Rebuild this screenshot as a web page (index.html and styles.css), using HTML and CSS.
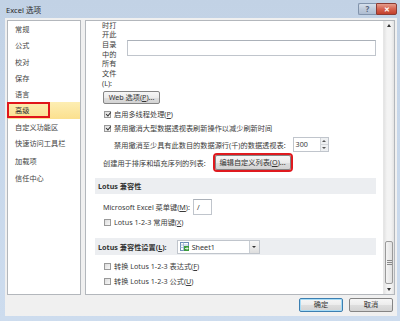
FILE: index.html
```html
<!DOCTYPE html>
<html lang="zh-CN">
  <head>
    <meta charset="UTF-8" />
    <title>Excel 选项</title>
    <link rel="stylesheet" href="styles.css">
  </head>
  <body>
    <div class="window">
      <div class="titlebar">
        <span class="title">Excel 选项</span>
        <div class="caption-buttons">
          <span class="cap-btn help">?</span>
          <span class="cap-btn close">✕</span>
        </div>
      </div>
      <div class="client">
        <div class="panes">
          <ul class="nav">
            <li>常规</li>
            <li>公式</li>
            <li>校对</li>
            <li>保存</li>
            <li>语言</li>
            <li class="active"><span class="mark"></span>高级</li>
            <li>自定义功能区</li>
            <li>快速访问工具栏</li>
            <li class="group">加载项</li>
            <li>信任中心</li>
          </ul>
          <div class="options">
            <div class="content">
              <div class="folder-row">
                <label class="wrap-label">时打开此目录中的所有文件(L):</label>
                <input class="textbox wide" type="text" value="" />
              </div>
              <button class="btn web-btn">Web 选项(<u>P</u>)...</button>
              <div class="check-row first">
                <span class="check on"></span>启用多线程处理(<u>P</u>)
              </div>
              <div class="check-row">
                <span class="check on"></span>禁用撤消大型数据透视表刷新操作以减少刷新时间
              </div>
              <div class="spin-row">
                <span>禁用撤消至少具有此数目的数据源行(千)的数据透视表:</span>
                <div class="spinbox">
                  <span class="spin-value">300</span>
                  <span class="spin-arrows"><i class="up"></i><i class="down"></i></span>
                </div>
              </div>
              <div class="list-row">
                <span>创建用于排序和填充序列的列表:</span>
                <button class="btn marked">编辑自定义列表(<u>O</u>)...</button>
              </div>

              <div class="section">Lotus 兼容性</div>
              <div class="key-row">
                <span>Microsoft Excel 菜单键(<u>M</u>):</span>
                <span class="textbox small">/</span>
              </div>
              <div class="check-row">
                <span class="check"></span>Lotus 1-2-3 常用键(<u>X</u>)
              </div>

              <div class="section settings">
                <span>Lotus 兼容性设置(<u>L</u>):</span>
                <div class="combo">
                  <svg class="sheet-icon" width="9" height="9" viewBox="0 0 9 9">
                    <rect x="0.5" y="0.5" width="8" height="8" fill="#fff" stroke="#6f8fb8" />
                    <path d="M0.5 3H8.5M0.5 5.5H8.5M3.5 0.5V8.5" stroke="#9bb3d3" stroke-width="0.8" />
                    <rect x="4" y="4" width="5" height="5" fill="#3d9b3d" />
                    <path d="M5 6.5H8M6.8 5.2L8 6.5L6.8 7.8" stroke="#fff" stroke-width="0.8" fill="none" />
                  </svg>
                  <span class="combo-text">Sheet1</span>
                  <span class="combo-arrow"></span>
                </div>
              </div>
              <div class="check-row first-after">
                <span class="check"></span>转换 Lotus 1-2-3 表达式(<u>F</u>)
              </div>
              <div class="check-row">
                <span class="check"></span>转换 Lotus 1-2-3 公式(<u>U</u>)
              </div>
            </div>
            <div class="scrollbar">
              <span class="arrow up"></span>
              <span class="track"></span>
              <span class="thumb"><i></i><i></i><i></i></span>
              <span class="arrow down"></span>
            </div>
          </div>
        </div>
        <div class="footer">
          <button class="btn default">确定</button>
          <button class="btn">取消</button>
        </div>
      </div>
    </div>
  </body>
</html>
```

FILE: styles.css
```css
* {
  box-sizing: border-box;
}
body {
  margin: 0;
  font-family: "Noto Sans", "Noto Sans CJK SC", sans-serif;
  font-size: 7.2px;
  color: #3a3a3a;
  background: #fff;
}
u {
  text-decoration: underline;
}
.window {
  width: 400px;
  height: 321px;
  display: flex;
  flex-direction: column;
  padding: 0 3px 5px 5px;
  background: linear-gradient(180deg, #c2d2e5 0%, #c7d7ea 40%, #cddcee 100%);
}
.titlebar {
  height: 18px;
  display: flex;
  align-items: flex-start;
  justify-content: space-between;
}
.title {
  margin: 5px 0 0 1px;
  font-size: 7.6px;
  line-height: 10px;
  color: #2a2a2a;
}
.caption-buttons {
  display: flex;
  margin-top: 3px;
}
.cap-btn {
  height: 12px;
  display: flex;
  align-items: center;
  justify-content: center;
  border: 1px solid #8193ab;
  border-radius: 2px;
  font-size: 8px;
  font-weight: bold;
  line-height: 1;
}
.help {
  width: 18px;
  border-right: none;
  border-radius: 2px 0 0 2px;
  color: #56647a;
  background: linear-gradient(180deg, #d6e0ec 0%, #bfcbdb 50%, #aebdd2 100%);
}
.close {
  width: 21px;
  border-color: #8c3b33;
  border-radius: 0 2px 2px 0;
  color: #fff;
  font-size: 7px;
  background: linear-gradient(180deg, #e59c8c 0%, #d6624f 50%, #c2402c 100%);
}
.client {
  flex: 1;
  display: flex;
  flex-direction: column;
  background: #f0f0f0;
  padding: 2px 2px 0 2px;
}
.panes {
  height: 275px;
  display: flex;
  gap: 4px;
}

/* left navigation */
.nav {
  width: 74px;
  margin: 0;
  padding: 0;
  list-style: none;
  background: #fff;
  border: 1px solid #b3b7bc;
}
.nav li {
  position: relative;
  height: 16.3px;
  line-height: 16.3px;
  padding-left: 7px;
  color: #444;
}
.nav li.group {
  margin-top: 2px;
}
.nav li.active {
  background: linear-gradient(180deg, #fdeeb3 0%, #fbe08e 100%);
  color: #333;
}
.nav .mark {
  position: absolute;
  left: -1px;
  top: 0;
  width: 43px;
  height: 16px;
  border: 2px solid #e0161b;
}

/* right options page */
.options {
  flex: 1;
  display: flex;
  overflow: hidden;
  background: #fff;
  border: 1px solid #b3b7bc;
}
.content {
  flex: 1;
  display: flex;
  flex-direction: column;
  align-items: flex-start;
  padding: 0 7px 0 9px;
  line-height: 14px;
}
.folder-row {
  display: flex;
  align-items: flex-start;
  width: 100%;
  margin: -0.5px 0 0 7px;
}
.wrap-label {
  width: 15px;
  line-height: 9.7px;
  word-break: break-all;
}
.textbox {
  height: 16px;
  background: #fff;
  border: 1px solid #c0c5cc;
  border-top-color: #abb1b9;
  font: inherit;
  padding: 0 3px;
}
.textbox.wide {
  flex: 1;
  margin: 19.5px 7px 0 10px;
}
.btn {
  font: inherit;
  font-size: 7.2px;
  line-height: 1;
  color: #333;
  padding: 0;
  border: 1px solid #858585;
  border-radius: 2px;
  background: linear-gradient(180deg, #f6f6f6 0%, #ececec 50%, #dedede 51%, #d3d3d3 100%);
}
.web-btn {
  width: 57px;
  height: 13px;
  margin: 3px 0 0 8px;
}
.check-row {
  display: flex;
  align-items: center;
  height: 14px;
  margin-left: 9px;
}
.check-row.first {
  margin-top: 3px;
}
.check-row.first-after {
  margin-top: 4px;
}
.check-row + .check-row {
  margin-top: 1px;
}
.check-row.first + .check-row {
  margin-top: 0;
}
.check {
  position: relative;
  width: 7px;
  height: 7px;
  margin-right: 3px;
  border: 1px solid #999;
  background: linear-gradient(135deg, #dcdcdc, #f8f8f8);
}
.check.on::after {
  content: "";
  position: absolute;
  left: 1.5px;
  top: -0.5px;
  width: 1.5px;
  height: 4px;
  border: solid #333;
  border-width: 0 1.2px 1.2px 0;
  transform: rotate(40deg);
}
.spin-row {
  display: flex;
  align-items: center;
  height: 15px;
  margin: 2px 0 0 19px;
}
.spinbox {
  display: flex;
  width: 36px;
  height: 15px;
  margin-left: 7px;
  border: 1px solid #c0c5cc;
  background: #fff;
}
.spin-value {
  flex: 1;
  padding-left: 2px;
  line-height: 13px;
}
.spin-arrows {
  width: 8px;
  display: flex;
  flex-direction: column;
  border-left: 1px solid #d2d5d9;
}
.spin-arrows i {
  flex: 1;
  display: flex;
  align-items: center;
  justify-content: center;
  background: #eef0f2;
}
.spin-arrows i + i {
  border-top: 1px solid #d2d5d9;
}
.spin-arrows i::after {
  content: "";
  border: 2px solid transparent;
}
.spin-arrows .up::after {
  border-bottom-color: #555;
  margin-top: -2px;
}
.spin-arrows .down::after {
  border-top-color: #555;
  margin-bottom: -2px;
}
.list-row {
  display: flex;
  align-items: center;
  height: 15px;
  margin: 3px 0 0 8px;
}
.btn.marked {
  width: 76px;
  height: 15px;
  margin-left: 9px;
  outline: 2px solid #df1a1f;
}
.section {
  width: 100%;
  height: 16px;
  margin-top: 8px;
  padding-left: 3px;
  display: flex;
  align-items: center;
  font-weight: bold;
  background: #eceef1;
  color: #333;
}
.section.settings {
  height: 17px;
  margin-top: 9px;
}
.key-row {
  display: flex;
  align-items: center;
  height: 16px;
  margin: 5px 0 0 8px;
}
.textbox.small {
  width: 19px;
  margin-left: 3px;
  line-height: 14px;
}
.combo {
  display: flex;
  align-items: center;
  width: 83px;
  height: 14px;
  margin-left: 10px;
  padding-left: 2px;
  background: #fff;
  border: 1px solid #c0c5cc;
  font-weight: normal;
}
.sheet-icon {
  margin-right: 3px;
}
.combo-text {
  flex: 1;
}
.combo-arrow {
  width: 10px;
  height: 12px;
  display: flex;
  align-items: center;
  justify-content: center;
  border-left: 1px solid #c9ced4;
  background: linear-gradient(180deg, #f7f7f7, #dedede);
}
.combo-arrow::after {
  content: "";
  border: 2px solid transparent;
  border-top: 2.5px solid #333;
  margin-top: 2px;
}

/* scrollbar */
.scrollbar {
  width: 11px;
  display: flex;
  flex-direction: column;
  background: linear-gradient(90deg, #e3e3e3, #f3f3f3 30%, #f3f3f3 70%, #e3e3e3);
  border-left: 1px solid #e6e6e6;
}
.arrow {
  height: 10px;
  display: flex;
  align-items: center;
  justify-content: center;
}
.arrow::after {
  content: "";
  border: 2px solid transparent;
}
.arrow.up::after {
  border-bottom: 3px solid #333;
  margin-top: -3px;
}
.arrow.down::after {
  border-top: 3px solid #333;
  margin-bottom: -3px;
}
.track {
  flex: 1;
}
.thumb {
  height: 43px;
  margin: 0 1px;
  display: flex;
  flex-direction: column;
  align-items: center;
  justify-content: center;
  gap: 1px;
  border: 1px solid #9a9a9a;
  border-radius: 2px;
  background: linear-gradient(90deg, #f4f4f4, #e2e2e2);
}
.thumb i {
  width: 5px;
  height: 1px;
  background: #8a8a8a;
}

/* dialog buttons */
.footer {
  flex: 1;
  display: flex;
  justify-content: flex-end;
  align-items: flex-start;
  gap: 6px;
  padding: 3px 2px 0 0;
}
.footer .btn {
  width: 44px;
  height: 14px;
}
.footer .btn.default {
  border-color: #3c7fb1;
  box-shadow: inset 0 0 0 1px #a8dcf6;
}
```
